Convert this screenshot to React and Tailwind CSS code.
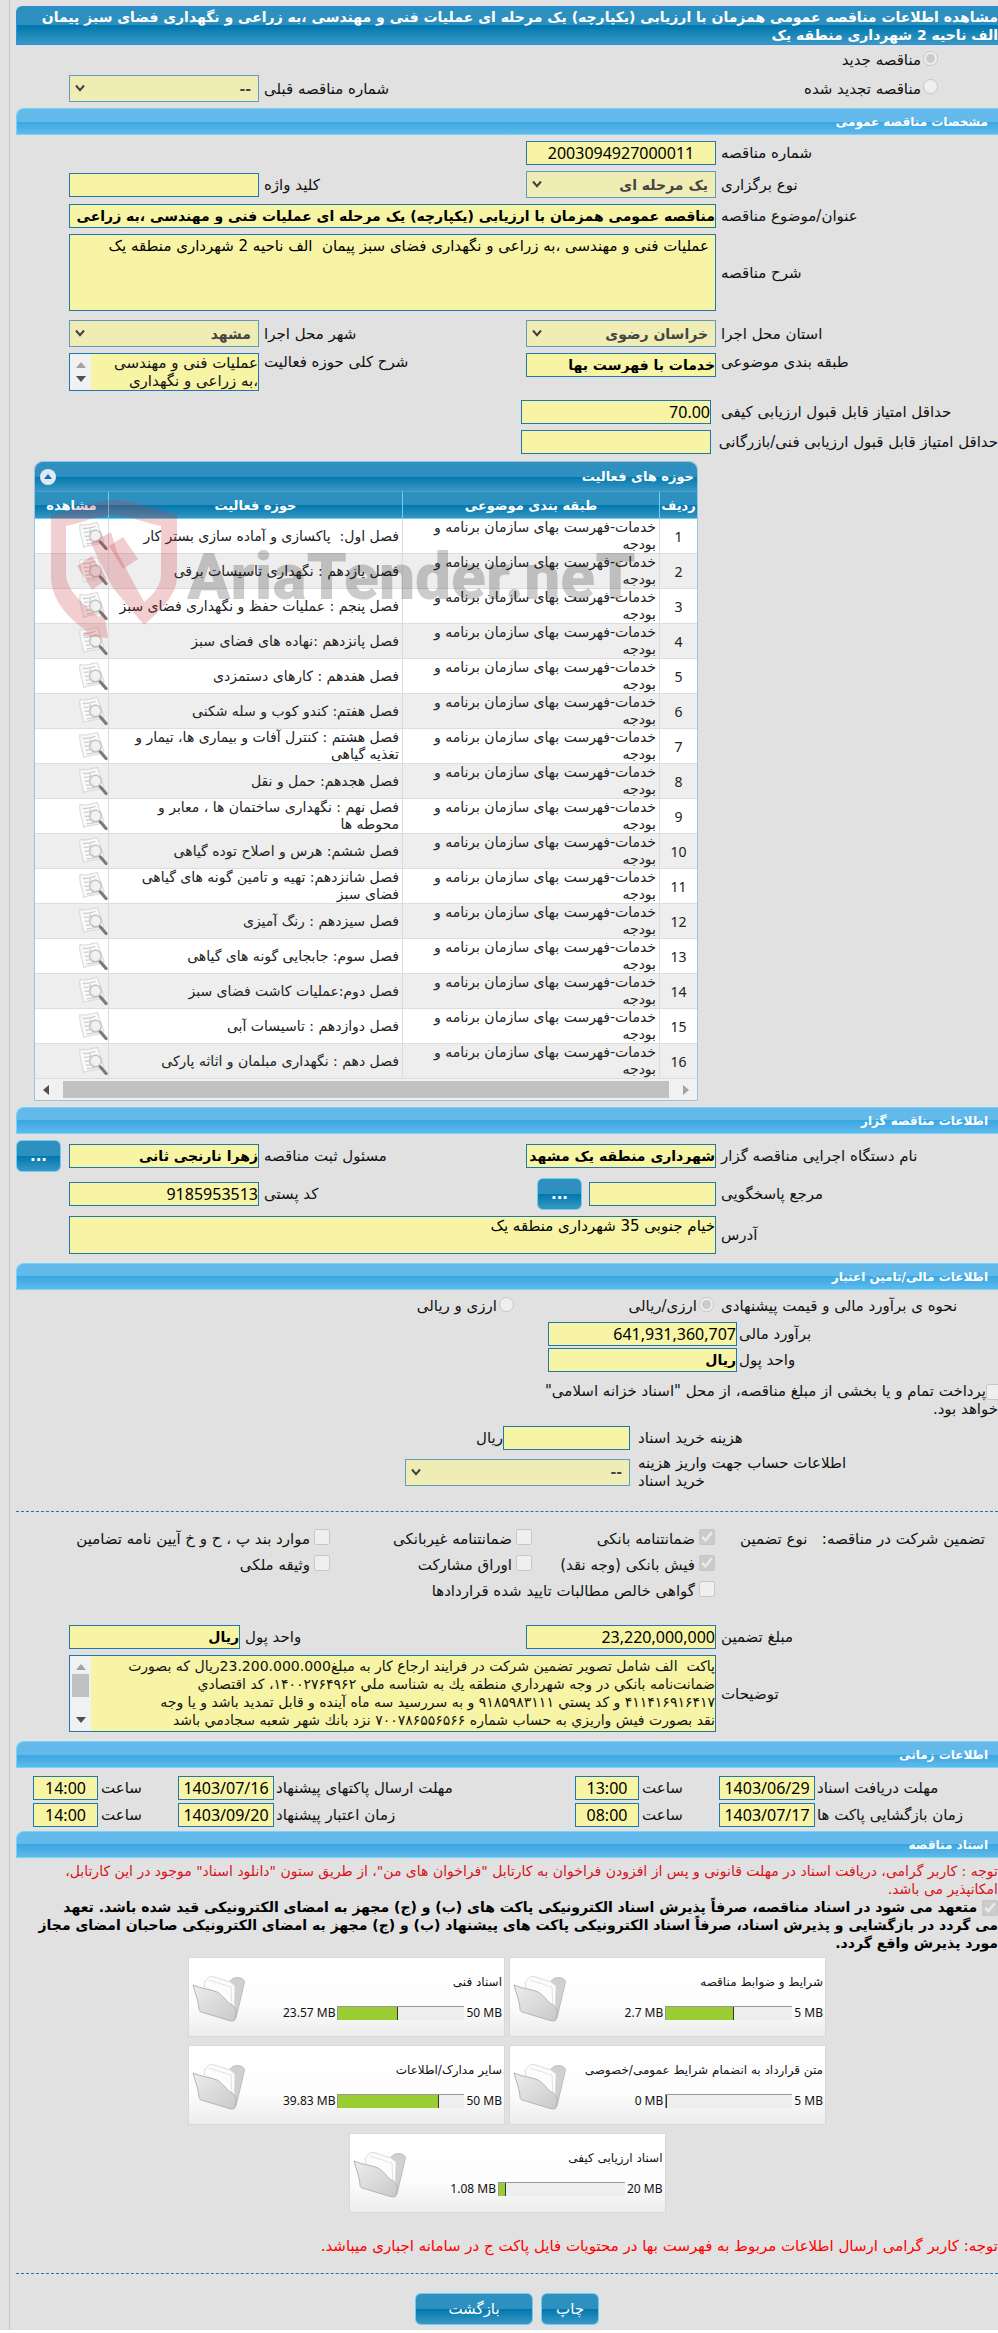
import React from 'react';
import clsx from 'clsx';

const CATEGORY = 'خدمات-فهرست بهای سازمان برنامه و بودجه';

const ACTIVITIES = [
    'فصل اول:  پاکسازی و آماده سازی بستر کار',
    'فصل یازدهم : نگهداری تاسیسات برقی',
    'فصل پنجم : عملیات حفظ و نگهداری فضای سبز',
    'فصل پانزدهم :نهاده های فضای سبز',
    'فصل هفدهم : کارهای دستمزدی',
    'فصل هفتم: کندو کوب و سله شکنی',
    'فصل هشتم : کنترل آفات و بیماری ها، تیمار و تغذیه گیاهی',
    'فصل هجدهم: حمل و نقل',
    'فصل نهم : نگهداری ساختمان ها ، معابر و محوطه ها',
    'فصل ششم: هرس و اصلاح توده گیاهی',
    'فصل شانزدهم: تهیه و تامین گونه های گیاهی فضای سبز',
    'فصل سیزدهم : رنگ آمیزی',
    'فصل سوم: جابجایی گونه های گیاهی',
    'فصل دوم:عملیات کاشت فضای سبز',
    'فصل دوازدهم : تاسیسات آبی',
    'فصل دهم : نگهداری مبلمان و اثاثه پارکی',
];

const FOLDERS = [
    { title: 'شرایط و ضوابط مناقصه', max: 5, used: 2.7 },
    { title: 'اسناد فنی', max: 50, used: 23.57 },
    { title: 'متن قرارداد به انضمام شرایط عمومی/خصوصی', max: 5, used: 0 },
    { title: 'سایر مدارک/اطلاعات', max: 50, used: 39.83 },
    { title: 'اسناد ارزیابی کیفی', max: 20, used: 1.08 },
];

const NOTES = `پاکت  الف شامل تصویر تضمین شرکت در فرایند ارجاع کار به مبلغ23.200.000.000ریال که بصورت
ضمانت‌نامه بانكي در وجه شهرداري منطقه يك به شناسه ملي ۱۴۰۰۲۷۶۴۹۶۲، كد اقتصادي
۴۱۱۴۱۶۹۱۶۴۱۷ و كد پستي ۹۱۸۵۹۸۳۱۱۱ و به سررسيد سه ماه آينده و قابل تمديد باشد و یا وجه
نقد بصورت فيش واريزي به حساب شماره ۷۰۰۷۸۶۵۵۶۵۶۶ نزد بانك شهر شعبه سجادمي باشد`;

const FIELD = 'block w-full min-w-0 border border-[#1f78ad] bg-[#f7f5a5] text-black outline-none';
const GRID = 'grid grid-cols-[282px_190px_1fr_190px_53px] items-center';
const BLUE = 'bg-[linear-gradient(#2e90be_0%,#2e90be_50%,#0077ae_50%,#3a98c4_100%)]';

const SectionBar = ({ children }) => (
    <h2 className="flex h-[27px] items-center rounded-tl-lg border-y border-l border-[#74d3f8] bg-[linear-gradient(#63baea_0%,#63baea_50%,#38a7e2_50%,#60b9ea_100%)] pr-[10px] text-[12px] font-bold text-white">
        {children}
    </h2>
);

const Label = ({ htmlFor, className, children }) => (
    <label htmlFor={htmlFor} className={clsx('whitespace-nowrap text-left', className || 'pl-[5px]')}>{children}</label>
);

const TextBox = ({ id, value = '', className, bold, numeric }) => (
    <input
        id={id}
        readOnly
        value={value}
        dir={numeric ? 'ltr' : 'rtl'}
        className={clsx(FIELD, 'h-6', bold ? 'text-[14px] font-bold' : 'text-[16px]', numeric && "font-['Noto_Sans','DejaVu_Sans',sans-serif]", className)}
    />
);

const SelectBox = ({ id, value, className }) => (
    <div className={clsx('relative', className)}>
        <select id={id} disabled className="block h-[27px] w-full appearance-none border border-[#5c9dbf] bg-[#efedb4] pr-[7px] text-[14px] font-bold text-[#454545]">
            <option>{value}</option>
        </select>
        <svg className="pointer-events-none absolute left-[6px] top-[9px]" width="10" height="8" viewBox="0 0 10 8" fill="none" stroke="#404040" strokeWidth="2">
            <path d="M1 1.5 5 6.2 9 1.5" />
        </svg>
    </div>
);

const Check = ({ label, checked, className }) => (
    <label className={clsx('flex items-center gap-1 whitespace-nowrap', className)}>
        <input type="checkbox" disabled defaultChecked={checked} className="mb-1 size-4 shrink-0" />
        {label}
    </label>
);

const Radio = ({ label, name, checked, className }) => (
    <label className={clsx('flex items-center gap-[2px] whitespace-nowrap', className)}>
        <input type="radio" name={name} disabled defaultChecked={checked} className="mb-1 size-[15px] shrink-0" />
        {label}
    </label>
);

const BlueButton = ({ className, children, ...rest }) => (
    <button type="button" className={clsx(BLUE, 'h-8 rounded-md border border-[#6ccdf5] text-white', className)} {...rest}>
        {children}
    </button>
);

const Dashed = () => <hr className="border-t border-dashed border-[#1f78ad]" />;

// Vertical scroll track next to a textarea
const ScrollTrack = ({ thumb }) => (
    <div className="flex w-[21px] shrink-0 flex-col items-center justify-between bg-[#f1f1f1] py-2">
        <svg width="10" height="6" viewBox="0 0 10 6"><path d="M0 6 5 0l5 6z" fill="#a3a3a3" /></svg>
        {thumb && <div className="mb-4 h-[23px] w-[17px] bg-[#c1c1c1]" />}
        <svg width="10" height="6" viewBox="0 0 10 6"><path d="M0 0h10L5 6z" fill="#505050" /></svg>
    </div>
);

const ViewIcon = () => (
    <svg width="31" height="31" viewBox="0 0 31 31">
        <path d="M2 3C7 5 15 2 20 1l2 6 5 14C20 25 10 24 6 27 5 19 1 12 2 3z" fill="#fafafa" stroke="#d2d2d2" />
        <path d="M5 7c4 1 9-1 13-2M6 11c4 1 9-1 13-2M7 15c3 1 5 0 7-1M8 19c2 1 4 0 6-1M9 23c3 0 8-1 12-2M12 6l4 15" stroke="#cfcfcf" strokeWidth="1.4" fill="none" />
        <circle cx="18" cy="15" r="6" fill="#f0f0f0" fillOpacity=".85" stroke="#c4c4c4" strokeWidth="1.5" />
        <path d="m23 21 6 7" stroke="#7a7a7a" strokeWidth="3.2" strokeLinecap="round" />
    </svg>
);

const FolderIcon = () => (
    <svg width="54" height="50" viewBox="0 0 54 50">
        <defs>
            <linearGradient id="folder" x1="0" y1="0" x2="1" y2="1">
                <stop offset="0" stopColor="#ededed" />
                <stop offset="1" stopColor="#c9c9c9" />
            </linearGradient>
        </defs>
        <path d="M37 8c3-4 7-5 11-4 4 1 5 3 4 6l-8 34-3 2z" fill="#d0d0d0" stroke="#bcbcbc" />
        <path d="M12 9c2-3 4-6 7-7l19 6 5 4-1 30-26-14z" fill="#fcfcfc" stroke="#dcdcdc" />
        <path d="m17 6 22 7 1 22" fill="none" stroke="#e2e2e2" />
        <path d="M1 11c9 4 17 4 24 7 7 4 9 10 15 13 3 2 4 4 4 7l-1 7c0 2-2 2-4 2L9 38c-2-1-2-2-2-4C6 25 3 19 1 11z" fill="url(#folder)" stroke="#b4b4b4" />
    </svg>
);

const Watermark = () => (
    <div dir="ltr" className="pointer-events-none absolute left-[16px] top-[38px] flex items-end">
        <svg width="126" height="138" viewBox="0 0 126 138" fill="#c8323c" fillOpacity=".24">
            <path d="M0 15C22 10 44 0 62 0s42 9 64 15v62c0 16-14 32-33 48L62 88 44 52l-4-9 20-11 6 20 27 50c11-9 17-17 17-28V26C90 22 76 15 62 15S34 22 15 26v48c0 14 14 28 33 43l5-5 4 26-26-2 5-5C16 118 0 98 0 77z" />
            <path d="m58 46 14-9 15 22-15 10zM26 66l15-10 15 23-15 11z" />
        </svg>
        <span className="ml-[10px] pb-8 font-['Roboto',sans-serif] text-[64px] font-black leading-[56px] text-black/20">AriaTender.neT</span>
    </div>
);

const ActivityTable = () => (
    <section className="relative mr-[300px] ml-[18px] mt-[7px] rounded-t-lg border border-[#9cc4e0]">
        <div className={clsx(BLUE, 'flex h-[29px] items-center justify-between rounded-t-lg pl-[5px] pr-[3px] text-white')}>
            <h3 className="text-[13px] font-bold">حوزه های فعالیت</h3>
            <button type="button" aria-label="بستن" className="flex size-4 items-center justify-center rounded-full bg-[#dfe9f5]">
                <svg width="8" height="5" viewBox="0 0 8 5"><path d="M0 5 4 0l4 5z" fill="#1d6fa0" /></svg>
            </button>
        </div>
        <table className="w-full table-fixed border-separate border-spacing-0 text-[14px] leading-[17px] text-[#222]">
            <thead>
                <tr className={clsx(BLUE, 'h-7 text-[13px] text-white')}>
                    <th className="w-[37px] border-b border-t border-b-[#6ccdf5] border-t-[#4aa3cf]">ردیف</th>
                    <th className="w-[257px] border-b border-r border-t border-[#6ccdf5] border-t-[#4aa3cf]">طبقه بندی موضوعی</th>
                    <th className="w-[294px] border-b border-r border-t border-[#6ccdf5] border-t-[#4aa3cf]">حوزه فعالیت</th>
                    <th className="border-b border-r border-t border-[#6ccdf5] border-t-[#4aa3cf]">مشاهده</th>
                </tr>
            </thead>
            <tbody>
                {ACTIVITIES.map((name, i) => (
                    <tr key={name} className={i % 2 ? 'bg-[#eeeeee]' : 'bg-white'}>
                        <td className="h-[35px] border-b border-[#dcdcdc] text-center font-['Noto_Sans',sans-serif]">{i + 1}</td>
                        <td className="border-b border-r border-[#dcdcdc] pl-5 pr-[3px]">{CATEGORY}</td>
                        <td className="whitespace-pre-wrap border-b border-r border-[#dcdcdc] px-[3px]">{name}</td>
                        <td className="border-b border-r border-[#dcdcdc]">
                            <a href="#view" className="flex justify-end pl-[43px]" aria-label="مشاهده"><ViewIcon /></a>
                        </td>
                    </tr>
                ))}
            </tbody>
        </table>
        <div className="flex h-[21px] items-center bg-[#f1f1f1] px-2">
            <svg width="6" height="10" viewBox="0 0 6 10"><path d="M0 0v10l6-5z" fill="#a3a3a3" /></svg>
            <div className="mx-[14px] h-[17px] flex-1 bg-[#c1c1c1]" />
            <svg width="6" height="10" viewBox="0 0 6 10"><path d="M6 0v10L0 5z" fill="#505050" /></svg>
        </div>
        <Watermark />
    </section>
);

const FolderCard = ({ title, max, used }) => (
    <article className="flex h-[80px] w-[317px] justify-between border border-[#d8d8d8] bg-[linear-gradient(#ffffff_0%,#fdfdfd_60%,#ececec_100%)]">
        <div className="pr-[2px] pt-[14px]">
            <h3 className="h-[33px] whitespace-nowrap text-[12px] leading-5">{title}</h3>
            <div className="flex items-center gap-[2px] whitespace-nowrap font-['Noto_Sans',sans-serif] text-[12px] leading-4">
                <span dir="ltr">{max} MB</span>
                <div className="flex h-[14px] w-[127px] justify-end border-l border-t border-[#999] bg-[#eee]">
                    <div className="border-r border-[#333] bg-[#9acd32]" style={{ width: `${(used / max) * 100}%` }} />
                </div>
                <span dir="ltr">{used} MB</span>
            </div>
        </div>
        <a href="#folder" className="pl-[3px] pt-[16px]" aria-label={title}><FolderIcon /></a>
    </article>
);

const DateRow = ({ rows }) => (
    <div className="grid h-[25px] grid-cols-[183px_96px_80px_64px_1fr_96px_80px_65px_17px] items-center">
        {rows.map(({ id, label, date, time }) => (
            <React.Fragment key={id}>
                <Label htmlFor={id} className="pl-[2px]">{label}</Label>
                <TextBox id={id} value={date} numeric className="text-center" />
                <Label htmlFor={`${id}-time`} className="pl-[3px]">ساعت</Label>
                <TextBox id={`${id}-time`} value={time} numeric className="text-center" />
            </React.Fragment>
        ))}
    </div>
);

export default function App() {
    return (
        <div className="bg-white pb-[2px]">
            <main dir="rtl" className="overflow-hidden bg-[#e1e1e1] pl-[9px] font-['DejaVu_Sans','Noto_Sans',sans-serif] text-[15px] leading-[18px] text-[#111]">
                <div className="border-l border-[#c6c6c6] pb-[5px] pl-[6px] pt-[6px]">
                    <h1 className={clsx(BLUE, 'h-[39px] rounded-tl-md border border-r-0 border-[#2a8fe0] pt-px text-[14px] font-bold text-white')}>
                        مشاهده اطلاعات مناقصه عمومی همزمان با ارزیابی (یکپارچه) یک مرحله ای عملیات فنی و مهندسی ،به زراعی و نگهداری فضای سبز پیمان الف ناحیه 2 شهرداری منطقه یک
                    </h1>

                    <Radio name="kind" checked label="مناقصه جدید" className="h-[30px] pr-[60px]" />
                    <div className={clsx(GRID, 'mb-[6px]')}>
                        <Radio name="kind" label="مناقصه تجدید شده" className="col-span-2 pr-[60px]" />
                        <Label htmlFor="prev">شماره مناقصه قبلی</Label>
                        <SelectBox id="prev" value="--" />
                    </div>

                    <SectionBar>مشخصات مناقصه عمومی</SectionBar>
                    <div className="flex flex-col gap-[6px] pt-[6px]">
                        <div className={GRID}>
                            <Label htmlFor="no">شماره مناقصه</Label>
                            <TextBox id="no" value="2003094927000011" numeric className="text-center" />
                        </div>
                        <div className={GRID}>
                            <Label htmlFor="type">نوع برگزاری</Label>
                            <SelectBox id="type" value="یک مرحله ای" />
                            <Label htmlFor="keyword">کلید واژه</Label>
                            <TextBox id="keyword" />
                        </div>
                        <div className={GRID}>
                            <Label htmlFor="title">عنوان/موضوع مناقصه</Label>
                            <TextBox id="title" bold className="col-span-3" value="مناقصه عمومی همزمان با ارزیابی (یکپارچه) یک مرحله ای عملیات فنی و مهندسی ،به زراعی" />
                        </div>
                        <div className={clsx(GRID, 'mb-[3px]')}>
                            <Label htmlFor="desc">شرح مناقصه</Label>
                            <textarea id="desc" readOnly className={clsx(FIELD, 'col-span-3 h-[77px] resize-none overflow-hidden px-[6px] pt-[2px]')} value="عملیات فنی و مهندسی ،به زراعی و نگهداری فضای سبز پیمان  الف ناحیه 2 شهرداری منطقه یک" />
                        </div>
                        <div className={GRID}>
                            <Label htmlFor="province">استان محل اجرا</Label>
                            <SelectBox id="province" value="خراسان رضوی" />
                            <Label htmlFor="city">شهر محل اجرا</Label>
                            <SelectBox id="city" value="مشهد" />
                        </div>
                        <div className={clsx(GRID, 'mb-[3px] items-start')}>
                            <Label htmlFor="cat">طبقه بندی موضوعی</Label>
                            <TextBox id="cat" bold value="خدمات با فهرست بها" />
                            <Label htmlFor="scope">شرح کلی حوزه فعالیت</Label>
                            <div className="flex h-[38px] border border-[#1f78ad]">
                                <textarea id="scope" readOnly className="min-w-0 flex-1 resize-none overflow-hidden bg-[#f7f5a5] leading-[18px] outline-none" value={'عملیات فنی و مهندسی\n،به زراعی و نگهداری'} />
                                <ScrollTrack />
                            </div>
                        </div>
                        <div className="flex items-center">
                            <Label htmlFor="minq" className="w-[277px]">حداقل امتیاز قابل قبول ارزیابی کیفی</Label>
                            <div className="mr-[10px] w-[190px]"><TextBox id="minq" value="70.00" numeric className="text-right" /></div>
                        </div>
                        <div className="flex items-center">
                            <Label htmlFor="mint" className="w-[277px]">حداقل امتیاز قابل قبول ارزیابی فنی/بازرگانی</Label>
                            <div className="mr-[10px] w-[190px]"><TextBox id="mint" /></div>
                        </div>
                    </div>

                    <ActivityTable />

                    <div className="mt-[6px]"><SectionBar>اطلاعات مناقصه گزار</SectionBar></div>
                    <div className="flex flex-col gap-[6px] pb-[9px] pt-[6px]">
                        <div className={GRID}>
                            <Label htmlFor="org">نام دستگاه اجرایی مناقصه گزار</Label>
                            <TextBox id="org" bold value="شهرداری منطقه یک مشهد" />
                            <Label htmlFor="officer">مسئول ثبت مناقصه</Label>
                            <TextBox id="officer" bold value="زهرا نارنجی ثانی" />
                            <BlueButton className="w-[45px] justify-self-end font-bold" aria-label="انتخاب مسئول">...</BlueButton>
                        </div>
                        <div className={GRID}>
                            <Label htmlFor="ref">مرجع پاسخگویی</Label>
                            <div className="flex items-center justify-between pl-[11px]">
                                <div className="w-[127px]"><TextBox id="ref" /></div>
                                <BlueButton className="w-[45px] font-bold" aria-label="انتخاب مرجع">...</BlueButton>
                            </div>
                            <Label htmlFor="zip">کد پستی</Label>
                            <TextBox id="zip" value="9185953513" numeric className="text-right" />
                        </div>
                        <div className={GRID}>
                            <Label htmlFor="addr">آدرس</Label>
                            <textarea id="addr" readOnly className={clsx(FIELD, 'col-span-3 h-[38px] resize-none overflow-hidden')} value="خیام جنوبی 35 شهرداری منطقه یک" />
                        </div>
                    </div>

                    <SectionBar>اطلاعات مالی/تامین اعتبار</SectionBar>
                    <div className="flex h-8 items-center">
                        <span className="w-[277px] whitespace-nowrap text-left">نحوه ی برآورد مالی و قیمت پیشنهادی</span>
                        <Radio name="currency" checked label="ارزی/ریالی" className="w-[200px] pr-[7px]" />
                        <Radio name="currency" label="ارزی و ریالی" className="pr-[7px]" />
                    </div>
                    <div className="grid grid-cols-[261px_189px] items-center gap-y-[2px]">
                        <Label htmlFor="est" className="pl-[2px]">برآورد مالی</Label>
                        <TextBox id="est" value="641,931,360,707" numeric className="text-right" />
                        <Label htmlFor="unit" className="pl-[2px]">واحد پول</Label>
                        <TextBox id="unit" bold value="ریال" />
                    </div>
                    <label className="-mr-1 mt-[10px] block w-[480px] whitespace-nowrap">
                        <input type="checkbox" disabled className="size-4 align-bottom" />
                        پرداخت تمام و یا بخشی از مبلغ مناقصه، از محل "اسناد خزانه اسلامی"<br />
                        <span className="pr-1">خواهد بود.</span>
                    </label>
                    <div className="mt-[8px] grid grid-cols-[368px_127px_1fr] items-center">
                        <Label htmlFor="cost" className="pl-[8px]">هزینه خرید اسناد</Label>
                        <TextBox id="cost" />
                        <span>ریال</span>
                    </div>
                    <div className="mb-[21px] mt-[4px] grid grid-cols-[368px_225px] items-center">
                        <Label htmlFor="account" className="pl-[8px]">اطلاعات حساب جهت واریز هزینه<br />خرید اسناد</Label>
                        <SelectBox id="account" value="--" />
                    </div>

                    <Dashed />
                    <div className="mt-[14px] grid grid-cols-[283px_183px_202px_1fr] [&>*]:h-[26px]">
                        <div className="flex items-center justify-between pl-[25px] pr-[13px]">
                            <span>تضمین شرکت در مناقصه:</span>
                            <span>نوع تضمین</span>
                        </div>
                        <Check checked label="ضمانتنامه بانکی" />
                        <Check label="ضمانتنامه غیربانکی" />
                        <Check label="موارد بند پ ، ح و خ آیین نامه تضامین" />
                        <Check checked label="فیش بانکی (وجه نقد)" className="col-start-2" />
                        <Check label="اوراق مشارکت" />
                        <Check label="وثیقه ملکی" />
                        <Check label="گواهی خالص مطالبات تایید شده قراردادها" className="col-span-3 col-start-2" />
                    </div>
                    <div className="flex flex-col gap-[6px] pb-[9px] pt-[21px]">
                        <div className={GRID}>
                            <Label htmlFor="bond">مبلغ تضمین</Label>
                            <TextBox id="bond" value="23,220,000,000" numeric className="text-right" />
                            <div className="col-span-2 flex items-center justify-end">
                                <Label htmlFor="bondunit">واحد پول</Label>
                                <div className="w-[171px]"><TextBox id="bondunit" bold value="ریال" /></div>
                            </div>
                        </div>
                        <div className={GRID}>
                            <Label htmlFor="notes">توضیحات</Label>
                            <div className="col-span-3 flex h-[77px] border border-[#1f78ad]">
                                <textarea id="notes" readOnly className="min-w-0 flex-1 resize-none overflow-hidden whitespace-pre bg-[#f7f5a5] pt-px text-[14px] leading-[18px] outline-none" value={NOTES} />
                                <ScrollTrack thumb />
                            </div>
                        </div>
                    </div>

                    <SectionBar>اطلاعات زمانی</SectionBar>
                    <div className="flex flex-col gap-[2px] pb-[4px] pt-[7px]">
                        <DateRow rows={[
                            { id: 'receive', label: 'مهلت دریافت اسناد', date: '1403/06/29', time: '13:00' },
                            { id: 'send', label: 'مهلت ارسال پاکتهای پیشنهاد', date: '1403/07/16', time: '14:00' },
                        ]} />
                        <DateRow rows={[
                            { id: 'open', label: 'زمان بازگشایی پاکت ها', date: '1403/07/17', time: '08:00' },
                            { id: 'valid', label: 'زمان اعتبار پیشنهاد', date: '1403/09/20', time: '14:00' },
                        ]} />
                    </div>

                    <SectionBar>اسناد مناقصه</SectionBar>
                    <p className="mt-[4px] text-[14px] text-[#d9121c]">
                        توجه : کاربر گرامی، دریافت اسناد در مهلت قانونی و پس از افزودن فراخوان به کارتابل "فراخوان های من"، از طریق ستون "دانلود اسناد" موجود در این کارتابل،<br />
                        امکانپذیر می باشد.
                    </p>
                    <label className="block text-[14px] font-bold text-black">
                        <input type="checkbox" disabled defaultChecked className="size-4 align-bottom" /> متعهد می شود در اسناد مناقصه، صرفاً پذیرش اسناد الکترونیکی پاکت های (ب) و (ج) مجهز به امضای الکترونیکی قید شده باشد. تعهد<br />
                        می گردد در بازگشایی و پذیرش اسناد، صرفاً اسناد الکترونیکی پاکت های پیشنهاد (ب) و (ج) مجهز به امضای الکترونیکی صاحبان امضای مجاز<br />
                        مورد پذیرش واقع گردد.
                    </label>

                    <div className="mx-auto mt-[5px] flex max-w-[640px] flex-wrap justify-center gap-x-1 gap-y-2">
                        {FOLDERS.map((f) => <FolderCard key={f.title} {...f} />)}
                    </div>

                    <p className="mb-[18px] mt-6 text-[#f00]">
                        توجه: کاربر گرامی ارسال اطلاعات مربوط به فهرست بها در محتویات فایل پاکت ج در سامانه اجباری میباشد.
                    </p>
                    <Dashed />
                    <div className="mt-[19px] flex justify-center gap-2">
                        <BlueButton className="w-[58px]">چاپ</BlueButton>
                        <BlueButton className="w-[118px]">بازگشت</BlueButton>
                    </div>
                </div>
            </main>
        </div>
    );
}
